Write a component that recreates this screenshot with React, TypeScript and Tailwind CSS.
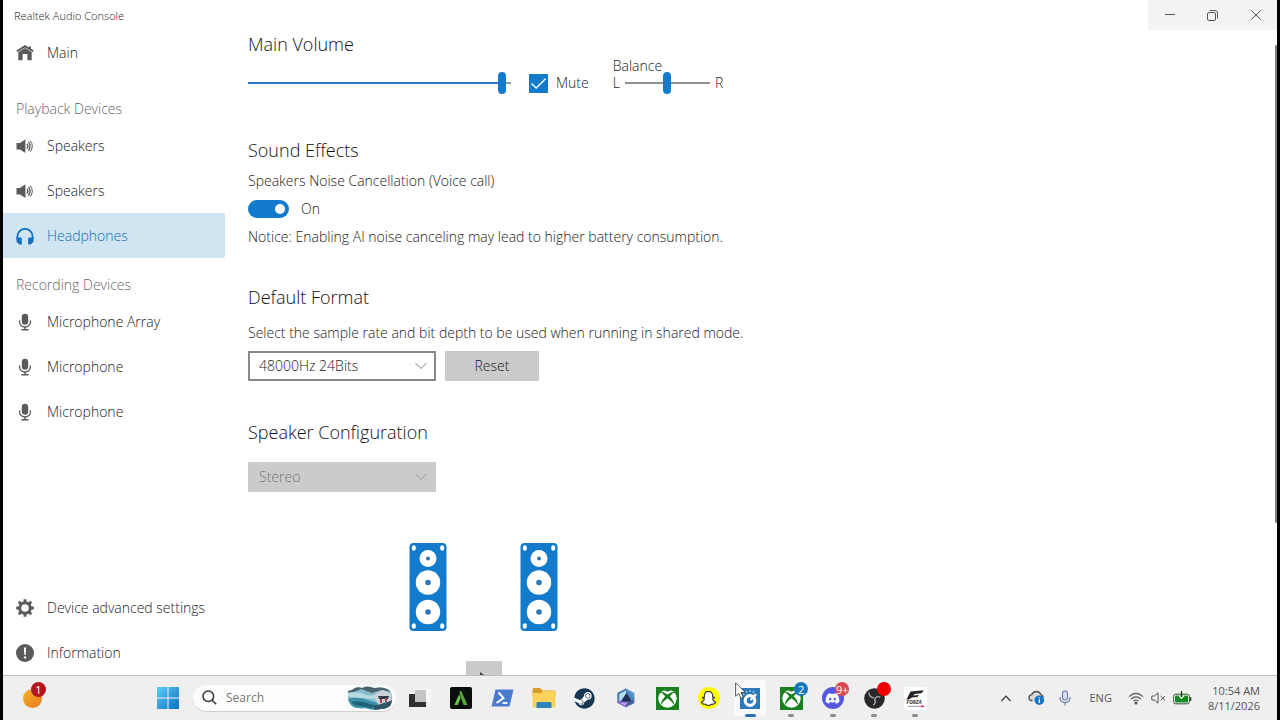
import { useState } from 'react'
import type { ReactNode } from 'react'
import { FaDiscord, FaSnapchatGhost, FaSteam } from 'react-icons/fa'

/* ─── Data ─── */

const PLAYBACK = [
  { id: 'spk-1', label: 'Speakers', icon: <SpeakerIcon /> },
  { id: 'spk-2', label: 'Speakers', icon: <SpeakerIcon /> },
  { id: 'hp', label: 'Headphones', icon: <HeadphonesIcon /> },
]

const RECORDING = [
  { id: 'mic-array', label: 'Microphone Array', icon: <MicIcon /> },
  { id: 'mic-1', label: 'Microphone', icon: <MicIcon /> },
  { id: 'mic-2', label: 'Microphone', icon: <MicIcon /> },
]

/* ─── Sidebar icons ─── */

function HomeIcon() {
  return (
    <svg width="18" height="18" viewBox="0 0 18 18" fill="currentColor">
      <path d="M9 1L0.3 6.4L1.2 8L9 3.4L16.8 8L17.7 6.4L15 4.7V2.6H13V3.5Z" />
      <path d="M9 4L2.3 8V16.2H6.6V10H11.4V16.2H15.7V8Z" />
    </svg>
  )
}

function SpeakerIcon() {
  return (
    <svg width="18" height="18" viewBox="0 0 18 18" fill="none" stroke="currentColor" strokeWidth="1.3">
      <path d="M0.5 6H4L9.4 2.2V16L4 12.4H0.5Z" fill="currentColor" stroke="none" />
      <path d="M11 6.8Q12.8 9.2 11 11.6" />
      <path d="M12.4 4.8Q15.8 9.2 12.4 13.6" />
      <path d="M14.2 3.6Q18.4 9.2 14.2 14.8" strokeWidth="1" />
    </svg>
  )
}

function HeadphonesIcon() {
  return (
    <svg width="18" height="18" viewBox="0 0 18 18" fill="none">
      <path d="M1.4 12V9.5A7.6 7.6 0 0 1 16.6 9.5V12" stroke="currentColor" strokeWidth="1.8" />
      <path d="M0.5 10.5H2.5L5.8 10.8V17.4H3.4L0.5 14.8Z" fill="currentColor" />
      <path d="M17.5 10.5H15.5L12.2 10.8V17.4H14.6L17.5 14.8Z" fill="currentColor" />
    </svg>
  )
}

function MicIcon() {
  return (
    <svg width="18" height="18" viewBox="0 0 18 18" fill="none">
      <rect x="5.8" y="0.8" width="6.4" height="11" rx="3.2" fill="currentColor" />
      <path d="M3.6 7.5V9.2A5.4 4.8 0 0 0 14.4 9.2V7.5" stroke="currentColor" strokeWidth="1.3" />
      <path d="M9 14V16.6M5.4 16.8H12.6" stroke="currentColor" strokeWidth="1.4" />
    </svg>
  )
}

function GearIcon() {
  return (
    <svg width="18" height="18" viewBox="0 0 18 18" fill="none" stroke="currentColor">
      <circle cx="9" cy="9" r="5.3" strokeWidth="3" />
      <path
        d="M9 0.2V3M9 15V17.8M0.2 9H3M15 9H17.8M2.8 2.8L4.8 4.8M13.2 13.2L15.2 15.2M2.8 15.2L4.8 13.2M13.2 4.8L15.2 2.8"
        strokeWidth="2.8"
      />
    </svg>
  )
}

function InfoIcon() {
  return (
    <svg width="18" height="18" viewBox="0 0 18 18">
      <circle cx="9" cy="9" r="9" fill="currentColor" />
      <path d="M7.9 3.6H10.1L9.7 11H8.3Z" fill="#fff" />
      <circle cx="9" cy="13.4" r="1.2" fill="#fff" />
    </svg>
  )
}

/* ─── Sidebar ─── */

type NavItemProps = {
  icon: ReactNode
  label: string
  active?: boolean
  onClick?: () => void
}

function NavItem({ icon, label, active, onClick }: NavItemProps) {
  return (
    <button
      type="button"
      onClick={onClick}
      className={`flex h-[45px] w-full shrink-0 items-center gap-[13px] rounded-r-xs pl-[13px] text-left ${
        active ? 'bg-[#cfe5f2] text-[#1070c0]' : 'text-[#5a5a5a]'
      }`}
    >
      {icon}
      <span className={active ? '' : 'text-[#222222]'}>{label}</span>
    </button>
  )
}

function Sidebar() {
  const [selected, setSelected] = useState('hp')

  return (
    <nav className="flex w-[222px] shrink-0 flex-col">
      <NavItem icon={<HomeIcon />} label="Main" />
      <h2 className="pt-6 pb-1 pl-[13px] leading-5 text-[#666666]">Playback Devices</h2>
      {PLAYBACK.map((d) => (
        <NavItem key={d.id} icon={d.icon} label={d.label} active={selected === d.id} onClick={() => setSelected(d.id)} />
      ))}
      <h2 className="pt-[17px] pb-1 pl-[13px] leading-5 text-[#666666]">Recording Devices</h2>
      {RECORDING.map((d) => (
        <NavItem key={d.id} icon={d.icon} label={d.label} active={selected === d.id} onClick={() => setSelected(d.id)} />
      ))}
      <div className="mt-auto">
        <NavItem icon={<GearIcon />} label="Device advanced settings" />
        <NavItem icon={<InfoIcon />} label="Information" />
      </div>
    </nav>
  )
}

/* ─── Controls ─── */

const SLIDER =
  'h-6 appearance-none bg-transparent bg-[length:100%_2px] bg-center bg-no-repeat [&::-webkit-slider-thumb]:h-[22px] [&::-webkit-slider-thumb]:w-2 [&::-webkit-slider-thumb]:appearance-none [&::-webkit-slider-thumb]:rounded-full [&::-webkit-slider-thumb]:bg-[#127bcb]'

function Chevron({ className }: { className: string }) {
  return (
    <svg width="12" height="8" viewBox="0 0 12 8" fill="none" className={`pointer-events-none absolute top-[11px] right-[9px] ${className}`}>
      <path d="M0.5 1L6 6.5L11.5 1" stroke="currentColor" />
    </svg>
  )
}

function TowerSpeaker() {
  return (
    <svg width="38" height="88" viewBox="0 0 38 88">
      <rect x="0.5" width="37" height="88" rx="4" fill="#127bcb" />
      <g fill="#fff">
        <ellipse cx="4.8" cy="5" rx="2" ry="2.8" />
        <ellipse cx="33.2" cy="5" rx="2" ry="2.8" />
        <ellipse cx="4.8" cy="83" rx="2" ry="2.8" />
        <ellipse cx="33.2" cy="83" rx="2" ry="2.8" />
        <circle cx="19" cy="15.5" r="8.5" />
        <circle cx="19" cy="39.5" r="12.2" />
        <circle cx="19" cy="69" r="12.2" />
      </g>
      <g fill="#2f78b4">
        <circle cx="19" cy="15.5" r="2" />
        <circle cx="19" cy="39.5" r="2.8" />
        <circle cx="19" cy="69" r="2.8" />
      </g>
    </svg>
  )
}

/* ─── Settings ─── */

function Settings() {
  const [volume, setVolume] = useState(98)
  const [balance, setBalance] = useState(50)

  return (
    <main className="min-w-0 flex-1 overflow-hidden pl-[23px]">
      <section className="h-[106px]">
        <h1 className="text-lg leading-7 text-[#111111]">Main Volume</h1>
        <div className="flex items-end">
          <input
            type="range"
            aria-label="Main Volume"
            value={volume}
            onChange={(e) => setVolume(Number(e.target.value))}
            className={`w-[263px] ${SLIDER}`}
            style={{ backgroundImage: `linear-gradient(to right, #2a78c4 ${volume}%, #999999 ${volume}%)` }}
          />
          <label className="ml-[18px] flex h-6 items-center gap-2">
            <span className="grid size-[19px]">
              <input type="checkbox" defaultChecked className="peer col-start-1 row-start-1 appearance-none border border-[#127bcb] checked:bg-[#127bcb]" />
              <svg viewBox="0 0 19 19" fill="none" className="pointer-events-none invisible col-start-1 row-start-1 peer-checked:visible">
                <path d="M2.5 9.5L7.2 14L16.5 4.8" stroke="#fff" strokeWidth="1.4" />
              </svg>
            </span>
            Mute
          </label>
          <div className="ml-6">
            <label htmlFor="balance" className="-mb-[3px] block leading-4">
              Balance
            </label>
            <div className="flex h-6 items-center gap-[5px]">
              <span>L</span>
              <input
                id="balance"
                type="range"
                value={balance}
                onChange={(e) => setBalance(Number(e.target.value))}
                className={`w-[85px] bg-linear-to-r from-[#909090] to-[#909090] ${SLIDER}`}
              />
              <span>R</span>
            </div>
          </div>
        </div>
      </section>

      <section className="h-[147px]">
        <h1 className="text-lg leading-7 text-[#111111]">Sound Effects</h1>
        <p id="noise" className="mt-[7px] leading-5">Speakers Noise Cancellation (Voice call)</p>
        <label className="mt-2 flex items-center gap-3 leading-5">
          <input
            type="checkbox"
            role="switch"
            aria-labelledby="noise"
            defaultChecked
            className="flex h-[18px] w-[41px] appearance-none items-center rounded-full bg-[#999999] px-1 before:size-[10px] before:rounded-full before:bg-white checked:justify-end checked:bg-[#127bcb]"
          />
          On
        </label>
        <p className="mt-2 leading-5">Notice: Enabling AI noise canceling may lead to higher battery consumption.</p>
      </section>

      <section className="h-[135px]">
        <h1 className="text-lg leading-7 text-[#111111]">Default Format</h1>
        <label htmlFor="format" className="mt-3 block leading-5">
          Select the sample rate and bit depth to be used when running in shared mode.
        </label>
        <div className="mt-2 flex gap-[9px]">
          <div className="relative">
            <select id="format" className="h-[30px] w-[188px] appearance-none border-2 border-[#888888] bg-white pl-[9px]">
              <option>48000Hz 24Bits</option>
            </select>
            <Chevron className="text-[#777777]" />
          </div>
          <button type="button" className="h-[30px] w-[94px] bg-[#cbcbcb]">
            Reset
          </button>
        </div>
      </section>

      <section>
        <h1 id="config" className="text-lg leading-7 text-[#111111]">Speaker Configuration</h1>
        <div className="relative mt-4 w-[188px]">
          <select
            aria-labelledby="config"
            disabled
            className="h-[30px] w-full appearance-none bg-[#cbcbcb] pl-[11px] text-[#777777] opacity-100"
          >
            <option>Stereo</option>
          </select>
          <Chevron className="text-[#999999]" />
        </div>
        <div className="mt-[51px] flex w-[471px] flex-col items-center gap-[30px]">
          <div className="flex gap-[73px]">
            <TowerSpeaker />
            <TowerSpeaker />
          </div>
          <button type="button" aria-label="Play test tone" className="flex h-[30px] w-9 justify-center bg-[#cbcbcb] pt-[11px]">
            <svg width="10" height="12" viewBox="0 0 10 12">
              <path d="M1 0L9 6L1 12Z" fill="#444444" />
            </svg>
          </button>
        </div>
      </section>
    </main>
  )
}

/* ─── Window title bar ─── */

function TitleBar() {
  return (
    <header className="flex h-[30px] shrink-0 items-start justify-between">
      <span className="pt-2 pl-[11px] text-[11px] leading-4">Realtek Audio Console</span>
      <div className="flex h-[30px] bg-[#f3f3f3] text-[#555555]">
        <button type="button" aria-label="Minimize" className="grid w-[43px] place-items-center">
          <svg width="10" height="10" viewBox="0 0 10 10" stroke="currentColor">
            <path d="M0 4.5H10" />
          </svg>
        </button>
        <button type="button" aria-label="Restore" className="grid w-[43px] place-items-center">
          <svg width="11" height="11" viewBox="0 0 11 11" fill="none" stroke="currentColor">
            <rect x="0.5" y="2.5" width="8" height="8" rx="1.5" />
            <path d="M2.5 0.5H8A2.5 2.5 0 0 1 10.5 3V8.5" />
          </svg>
        </button>
        <button type="button" aria-label="Close" className="grid w-[43px] place-items-center">
          <svg width="10" height="10" viewBox="0 0 10 10" stroke="currentColor">
            <path d="M0.3 0.3L9.7 9.7M9.7 0.3L0.3 9.7" />
          </svg>
        </button>
      </div>
    </header>
  )
}

/* ─── Taskbar icons ─── */

function WindowsLogo() {
  return (
    <svg width="22" height="22" viewBox="0 0 22 22">
      <defs>
        <linearGradient id="win" x1="0" y1="0" x2="1" y2="1">
          <stop offset="0" stopColor="#5fcdf6" />
          <stop offset="1" stopColor="#0a70c4" />
        </linearGradient>
      </defs>
      <path d="M0 0H10.5V10.5H0ZM11.5 0H22V10.5H11.5ZM0 11.5H10.5V22H0ZM11.5 11.5H22V22H11.5Z" fill="url(#win)" />
    </svg>
  )
}

function SearchArt() {
  return (
    <svg width="46" height="24" viewBox="0 0 46 24">
      <defs>
        <clipPath id="art">
          <path d="M1 8Q0 4 5 4Q9 0 15 2Q20 -1 27 2Q38 0 43 5Q46 9 45 15Q44 23 34 23Q26 25 18 22Q8 23 4 19Q0 14 1 8Z" />
        </clipPath>
      </defs>
      <g clipPath="url(#art)">
        <rect width="46" height="24" fill="#86bccb" />
        <path d="M0 0H46V6L34 4L25 7L14 3L7 6L0 7Z" fill="#4a626c" />
        <path d="M0 7Q12 5 17 8T31 8V12Q18 14 0 10Z" fill="#b7dce5" />
        <path d="M0 13Q12 10 21 14T38 16V24H0Z" fill="#3a91a7" />
        <path d="M4 16Q13 14 23 18L31 20L24 22L8 19Z" fill="#1e6178" />
        <path d="M28 8L36 4L44 8V18L38 16L32 19L28 14Z" fill="#cbd2d5" />
        <path d="M31 10H42L41 13H32Z" fill="#343e4b" />
        <path d="M33 13H35V17H33ZM38 12H40V16H38Z" fill="#a63f5b" />
        <path d="M27 20L38 17L46 14V24H27Z" fill="#315360" />
      </g>
    </svg>
  )
}

function TaskView() {
  return (
    <svg width="24" height="22" viewBox="0 0 24 22">
      <rect x="1" y="7" width="17" height="13" fill="#303030" />
      <rect x="7" y="2" width="16" height="13" fill="#f8f8f8" />
      <rect x="7" y="3" width="11" height="12" fill="#c4c4c4" />
    </svg>
  )
}

function BladeApp() {
  return (
    <svg width="22" height="22" viewBox="0 0 22 22">
      <rect width="22" height="22" rx="2" fill="#0b0f0b" />
      <path d="M9.4 4H11.4L17.5 18H13.6L10.2 9Z" fill="#58a63f" />
      <path d="M9 7.4L10.6 11L7.8 18H4.4Z" fill="#6fbe4b" />
      <path d="M11 6L14 12L12.8 9.8Z" fill="#0b0f0b" />
    </svg>
  )
}

function PowerShell() {
  return (
    <svg width="23" height="18" viewBox="0 0 23 18">
      <path d="M4.5 0.5H22.5L18.5 17.5H0.5Z" fill="#4a7bce" />
      <path d="M7.5 3.5L12.5 9L5.5 14" stroke="#fff" strokeWidth="2" fill="none" />
      <path d="M11.5 14H16.5" stroke="#fff" strokeWidth="1.8" />
    </svg>
  )
}

function Explorer() {
  return (
    <svg width="24" height="20" viewBox="0 0 24 20">
      <path d="M0.5 1.5Q0.5 0 2 0H8L10.5 2.5H22Q23.5 2.5 23.5 4V8H0.5Z" fill="#d49b25" />
      <path d="M0.5 5H9L11 2.8H22Q23.5 2.8 23.5 4.3V18Q23.5 19.5 22 19.5H2Q0.5 19.5 0.5 18Z" fill="#fbd25a" />
      <path d="M4.5 20V15.5Q4.5 14 6 14H18Q19.5 14 19.5 15.5V20Z" fill="#2c84b8" />
    </svg>
  )
}

function Hexagon() {
  return (
    <svg width="20" height="20" viewBox="0 0 20 20">
      <defs>
        <linearGradient id="hex" x1="0" y1="1" x2="1" y2="0">
          <stop offset="0" stopColor="#a45ae0" />
          <stop offset="0.5" stopColor="#3d6da8" />
          <stop offset="1" stopColor="#66b4e4" />
        </linearGradient>
      </defs>
      <path d="M10 0.5L18.5 5V15L10 19.5L1.5 15V5Z" fill="url(#hex)" />
      <path d="M10 0.5V5L4.5 13L1.5 15V5Z" fill="#4f7fa8" />
      <path d="M10 2.5V5.6L5 12.6L3.4 13.6V6Z" fill="#b4e2f2" />
      <path d="M10.6 5L15.6 13.4H5.4Z" fill="#1e3054" />
      <path d="M3.4 14.4H13L17 12V14.4L10 18Z" fill="#c59bf2" />
      <path d="M10 16L17 12V14.4L10 18Z" fill="#3f5686" />
    </svg>
  )
}

function Xbox() {
  return (
    <svg width="23" height="23" viewBox="0 0 23 23">
      <rect width="23" height="23" fill="#18801d" />
      <circle cx="11.5" cy="11.5" r="9.2" fill="#fff" />
      <path
        d="M4.8 5.2Q7.4 4 11.5 7.6Q15.6 4 18.2 5.2L18.6 5.8Q16.6 5.8 13.8 9.2Q18.2 14.2 18.2 18Q15.4 13.8 11.5 11.2Q7.6 13.8 4.8 18Q4.8 14.2 9.2 9.2Q6.4 5.8 4.4 5.8Z"
        fill="#18801d"
      />
      <path d="M6.6 3.4Q11.5 0.8 16.4 3.4Q14 3.2 11.5 4.8Q9 3.2 6.6 3.4Z" fill="#18801d" />
    </svg>
  )
}

function Snapchat() {
  return (
    <span className="grid size-[22px] place-items-center rounded-full bg-[#fffc00]">
      <FaSnapchatGhost size={15} fill="#fff" stroke="#333333" strokeWidth={36} />
    </span>
  )
}

function RealtekIcon() {
  return (
    <svg width="20" height="21" viewBox="0 0 20 21">
      <rect width="20" height="21" fill="#2d78b8" />
      <circle cx="10" cy="12.5" r="4.8" fill="none" stroke="#fff" strokeWidth="3.2" />
      <path d="M10.6 12L16 6.2" stroke="#fff" strokeWidth="2.4" />
      <path d="M3 6L4.4 7M6 3.2L7 4.6M10 2V3.8M14 3.2L13 4.6" stroke="#b9def6" strokeWidth="1.2" />
    </svg>
  )
}

function Discord() {
  return (
    <span className="grid size-[22px] place-items-center rounded-full bg-[#5558e0] text-white">
      <FaDiscord size={15} />
    </span>
  )
}

function Obs() {
  return (
    <svg width="21" height="21" viewBox="0 0 21 21">
      <circle cx="10.5" cy="10.5" r="10.3" fill="#28272a" />
      <g fill="none" stroke="#a9a9ad" strokeWidth="1.4">
        <path d="M5 4.5Q5.2 9.4 9.8 9.8" />
        <path d="M16.4 9.2Q12.2 7.4 10.6 11.2" />
        <path d="M9.2 17.2Q12.8 14.6 10.4 11" />
      </g>
    </svg>
  )
}

function Forza() {
  return (
    <svg width="23" height="23" viewBox="0 0 23 23">
      <rect width="23" height="23" fill="#fff" />
      <path d="M6.5 4.5L20 3.2L17.5 6.2L10.5 7L9.4 8.4L15 8L13.4 10L8 10.6L5 12.6H2.5Z" fill="#262626" />
      <text x="2.5" y="17.4" fontSize="5" fontWeight="700" fontStyle="italic" fill="#333333">
        FORZA
      </text>
      <path d="M4 19.3H16" stroke="#999999" />
      <path d="M16.5 19.3H20" stroke="#d03050" strokeWidth="1.6" />
    </svg>
  )
}

/* ─── Taskbar ─── */

type App = {
  name: string
  icon: ReactNode
  running?: boolean
  active?: boolean
  badge?: string
  badgeColor?: string
}

const APPS: App[] = [
  { name: 'Task View', icon: <TaskView /> },
  { name: 'Blade', icon: <BladeApp /> },
  { name: 'PowerShell', icon: <PowerShell /> },
  { name: 'File Explorer', icon: <Explorer /> },
  {
    name: 'Steam',
    icon: (
      <span className="grid size-[21px] place-items-center rounded-full bg-white text-[#163654]">
        <FaSteam size={21} />
      </span>
    ),
  },
  { name: 'Hexagon', icon: <Hexagon /> },
  { name: 'Xbox', icon: <Xbox /> },
  { name: 'Snapchat', icon: <Snapchat /> },
  { name: 'Realtek Audio Console', icon: <RealtekIcon />, active: true },
  { name: 'Xbox Game Bar', icon: <Xbox />, running: true, badge: '2', badgeColor: 'bg-[#1976bd]' },
  { name: 'Discord', icon: <Discord />, running: true, badge: '9+', badgeColor: 'bg-[#d9484f]' },
  { name: 'OBS Studio', icon: <Obs />, running: true, badge: '', badgeColor: 'bg-[#f00000]' },
  { name: 'Forza Horizon', icon: <Forza />, running: true },
]

function Cursor() {
  return (
    <svg width="12" height="18" viewBox="0 0 12 18" className="pointer-events-none absolute top-1.5 left-1.5 z-10">
      <path d="M0.6 0.8V14.2L3.7 11.4L5.8 16.2L8.2 15.2L6.1 10.5H10.4Z" fill="#fff" stroke="#444444" strokeWidth="0.9" />
    </svg>
  )
}

function TaskbarApp({ app }: { app: App }) {
  return (
    <button type="button" aria-label={app.name} className="relative grid h-full place-items-center">
      <span className={`grid h-9 w-8 place-items-center rounded-sm ${app.active ? 'bg-[#f9fafb]' : ''}`}>{app.icon}</span>
      {app.badge !== undefined && (
        <span
          className={`absolute top-1.5 right-1 grid h-[14px] min-w-[14px] place-items-center rounded-full text-[11px] leading-none font-normal text-white ${app.badgeColor}`}
        >
          {app.badge}
        </span>
      )}
      {app.running && <span className="absolute bottom-[3px] h-[3px] w-[6px] rounded-full bg-[#8c8c8c]" />}
      {app.active && <span className="absolute bottom-[3px] h-[3px] w-[11px] rounded-full bg-[#2d70b8]" />}
      {app.active && <Cursor />}
    </button>
  )
}

function Tray() {
  return (
    <div className="ml-auto flex items-center pr-[17px] text-[11px] font-normal text-[#555555]">
      <button type="button" aria-label="Show hidden icons" className="mr-[17px]">
        <svg width="10" height="7" viewBox="0 0 10 7" fill="none" stroke="#333333" strokeWidth="1.2">
          <path d="M0.5 6L5 1.2L9.5 6" />
        </svg>
      </button>
      <button type="button" aria-label="OneDrive" className="mr-[14px]">
        <svg width="17" height="16" viewBox="0 0 17 16">
          <path d="M4.5 10.8Q1 10.8 1 7.6Q1 5 3.8 4.6Q5 1.5 8.4 1.5Q11.8 1.6 12.8 4.6Q15.2 5 15.2 7.6" fill="#d8d8d8" stroke="#555555" strokeWidth="1.4" />
          <circle cx="11.3" cy="10.2" r="4.8" fill="#1973c8" />
          <path d="M11.3 9.2V13M11.3 7.2V8.2" stroke="#fff" strokeWidth="1.3" />
        </svg>
      </button>
      <button type="button" aria-label="Microphone in use" className="mr-[18px]">
        <svg width="12" height="16" viewBox="0 0 12 16" fill="none" stroke="#6b79a8" strokeWidth="1.1">
          <rect x="3.5" y="1" width="5" height="9" rx="2.5" fill="#d8e0f6" />
          <path d="M1 7V8A5 4.6 0 0 0 11 8V7M6 12.6V15.4" />
        </svg>
      </button>
      <button type="button" className="mr-4">
        ENG
      </button>
      <button type="button" aria-label="Network, volume and battery" className="mr-4 flex items-center gap-[7px]">
        <svg width="16" height="13" viewBox="0 0 16 13" fill="none" stroke="#555555" strokeWidth="1.1">
          <path d="M1 4.6Q8 -1.8 15 4.6M3.2 7Q8 2.6 12.8 7M5.4 9.2Q8 6.8 10.6 9.2" />
          <circle cx="8" cy="11" r="1" fill="#555555" />
        </svg>
        <svg width="15" height="12" viewBox="0 0 15 12" fill="none" stroke="#555555">
          <path d="M0.8 4H3.4L7 0.8V11.2L3.4 8H0.8ZM9.6 4L14 8.4M14 4L9.6 8.4" />
        </svg>
        <svg width="19" height="14" viewBox="0 0 19 14">
          <rect x="0.7" y="3.2" width="15.6" height="9.6" rx="2" fill="#fff" stroke="#2f4f2f" />
          <rect x="2" y="4.6" width="13" height="6.8" rx="1" fill="#178a22" />
          <path d="M17.5 6V10" stroke="#2f4f2f" strokeWidth="1.6" />
          <path d="M8.5 0V6" stroke="#1c3d1c" strokeWidth="1.3" />
          <path d="M5.8 4.4L8.5 7.4L11.2 4.4" stroke="#fff" strokeWidth="1.1" fill="none" />
        </svg>
      </button>
      <button type="button" className="text-right leading-[15px]">
        10:54 AM
        <br />
        8/11/2026
      </button>
    </div>
  )
}

function Taskbar() {
  return (
    <footer className="flex h-[45px] shrink-0 items-center border-t border-[#bdbdbd] bg-[#efefef]">
      <button type="button" aria-label="Weather" className="relative ml-5 size-[19px] shrink-0 rounded-full bg-linear-to-br from-[#f5b32d] to-[#e8761c]">
        <span className="absolute -top-[7px] -right-1 grid size-[15px] place-items-center rounded-full bg-[#b5151e] text-[11px] leading-none font-normal text-white">
          1
        </span>
      </button>
      <button type="button" aria-label="Start" className="ml-[115px] shrink-0">
        <WindowsLogo />
      </button>
      <div className="ml-[14px] flex h-[27px] w-[203px] shrink-0 items-center rounded-full border-b border-[#d0d0d0] bg-[#fdfdfd] pr-[3px] pl-[9px]">
        <svg width="15" height="15" viewBox="0 0 15 15" fill="none" stroke="#333333" strokeWidth="1.5">
          <circle cx="6.3" cy="6.3" r="5.3" />
          <path d="M10.2 10.2L14.2 14.2" />
        </svg>
        <input type="text" aria-label="Search" placeholder="Search" className="ml-[9px] w-0 flex-1 text-xs font-normal outline-none placeholder:text-[#777777]" />
        <SearchArt />
      </div>
      <div className="ml-[3px] grid h-full w-[537px] shrink-0 grid-cols-13">
        {APPS.map((app) => (
          <TaskbarApp key={app.name} app={app} />
        ))}
      </div>
      <Tray />
    </footer>
  )
}

/* ─── Main Component ─── */

export default function App() {
  return (
    <div className="flex h-screen flex-col overflow-hidden border-x-[3px] border-black bg-white font-['Open_Sans','Noto_Sans',sans-serif] text-sm font-light text-[#222222]">
      <TitleBar />
      <div className="flex min-h-0 flex-1">
        <Sidebar />
        <Settings />
        <div className="mt-[15px] h-[478px] w-[2px] shrink-0 rounded-full bg-[#808080]" />
      </div>
      <Taskbar />
    </div>
  )
}
